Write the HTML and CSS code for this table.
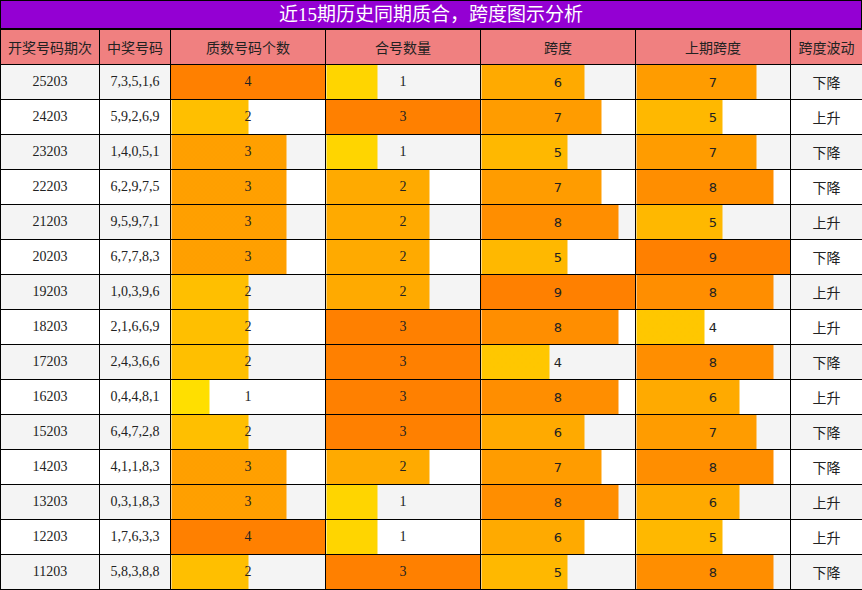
FILE: index.html
```html
<!DOCTYPE html>
<html lang="zh">
<head>
<meta charset="utf-8">
<link rel="stylesheet" href="styles.css">
</head>
<body>
<div class="wrap">
  <div class="title">近15期历史同期质合，跨度图示分析</div>
  <table class="grid">
    <colgroup>
      <col class="c-issue"><col class="c-code"><col class="c-bar"><col class="c-bar"><col class="c-bar"><col class="c-bar"><col class="c-trend">
    </colgroup>
    <thead>
      <tr><th>开奖号码期次</th><th>中奖号码</th><th>质数号码个数</th><th>合号数量</th><th>跨度</th><th>上期跨度</th><th>跨度波动</th></tr>
    </thead>
    <tbody id="rows"></tbody>
  </table>
</div>
<script src="app.js"></script>
</body>
</html>
```

FILE: app.js
```js
const data = [
  ["25203","7,3,5,1,6",4,1,6,7,"下降"],
  ["24203","5,9,2,6,9",2,3,7,5,"上升"],
  ["23203","1,4,0,5,1",3,1,5,7,"下降"],
  ["22203","6,2,9,7,5",3,2,7,8,"下降"],
  ["21203","9,5,9,7,1",3,2,8,5,"上升"],
  ["20203","6,7,7,8,3",3,2,5,9,"下降"],
  ["19203","1,0,3,9,6",2,2,9,8,"上升"],
  ["18203","2,1,6,6,9",2,3,8,4,"上升"],
  ["17203","2,4,3,6,6",2,3,4,8,"下降"],
  ["16203","0,4,4,8,1",1,3,8,6,"上升"],
  ["15203","6,4,7,2,8",2,3,6,7,"下降"],
  ["14203","4,1,1,8,3",3,2,7,8,"下降"],
  ["13203","0,3,1,8,3",3,1,8,6,"上升"],
  ["12203","1,7,6,3,3",4,1,6,5,"上升"],
  ["11203","5,8,3,8,8",2,3,5,8,"下降"]
];
const max = [4,3,9,9];
const body = document.getElementById("rows");
data.forEach((r) => {
  const tr = document.createElement("tr");
  let html = `<td>${r[0]}</td><td>${r[1]}</td>`;
  for (let i = 0; i < 4; i++) {
    const v = r[2 + i];
    const ratio = v / max[i];
    const hue = (60 - 30 * ratio).toFixed(1);
    const cls = i < 2 ? "bar serif" : "bar sans";
    html += `<td class="${cls}" style="--w:${(ratio * 100).toFixed(2)}%;--h:${hue}">${v}</td>`;
  }
  html += `<td class="trend">${r[6]}</td>`;
  tr.innerHTML = html;
  body.appendChild(tr);
});
```

FILE: styles.css
```css
html, body {
  margin: 0;
  padding: 0;
  background: #fff;
}
.wrap {
  width: 862px;
}
.title {
  height: 27px;
  line-height: 27px;
  border: 1px solid #000;
  background: #9400d3;
  color: #fff;
  text-align: center;
  font-family: "Liberation Serif", "Noto Sans CJK SC", serif;
  font-size: 19px;
}
.grid {
  width: 862px;
  border-collapse: collapse;
  table-layout: fixed;
  font-family: "Liberation Serif", "Noto Sans CJK SC", serif;
  font-size: 14px;
  color: #222;
}
.c-issue { width: 99px; }
.c-code { width: 71px; }
.c-bar { width: 155px; }
.c-trend { width: 72px; }
.grid th, .grid td {
  border: 1px solid #000;
  padding: 0;
  text-align: center;
  height: 34px;
}
.grid th {
  background: #f08080;
  font-family: "Noto Sans CJK SC", sans-serif;
  font-weight: normal;
  font-size: 14px;
  color: #222;
}
.grid tbody tr:nth-child(odd) td {
  background-color: #f4f4f4;
}
.grid tbody tr:nth-child(even) td {
  background-color: #fff;
}
.grid td.bar {
  background-image: linear-gradient(90deg, hsl(var(--h), 100%, 50%) var(--w), transparent var(--w));
}
.grid td.sans {
  font-family: "DejaVu Sans", sans-serif;
  font-size: 13px;
}
.grid td.trend {
  font-family: "Noto Sans CJK SC", sans-serif;
  font-size: 14px;
}
```
